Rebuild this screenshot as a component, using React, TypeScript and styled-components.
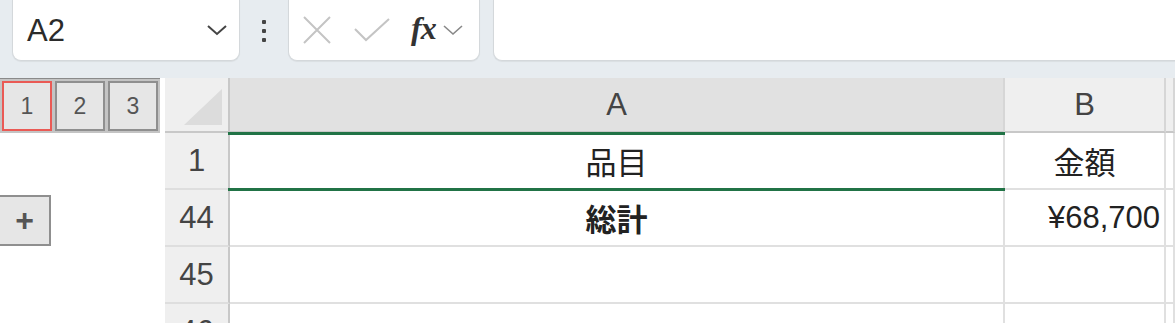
import React from "react";
import styled, { createGlobalStyle } from "styled-components";

const GlobalStyle = createGlobalStyle`
  html, body {
    margin: 0;
    padding: 0;
    background: #ffffff;
    overflow: hidden;
  }
  body {
    font-family: "Liberation Sans", "Noto Sans CJK JP", sans-serif;
    color: #333;
  }
`;

const Page = styled.div`
  width: 1175px;
  height: 323px;
  display: flex;
  flex-direction: column;
  overflow: hidden;
`;

const Toolbar = styled.div`
  height: 78px;
  flex: none;
  background: #e7ecf0;
  display: flex;
  align-items: flex-start;
  padding-left: 12px;
`;

const Box = styled.div<{ $width?: number; $grow?: boolean }>`
  height: 61px;
  box-sizing: border-box;
  background: #ffffff;
  border: 1px solid #d4d8db;
  border-top: none;
  border-radius: 0 0 9px 9px;
  box-shadow: 0 1px 1px rgba(0, 0, 0, 0.06);
  display: flex;
  align-items: center;
  ${(p) => (p.$width ? `width: ${p.$width}px;` : "")}
  ${(p) => (p.$grow ? "flex: 1; border-right: none; border-radius: 0 0 0 9px;" : "flex: none;")}
`;

const NameText = styled.span`
  font-size: 31px;
  color: #2b2b2b;
  padding-left: 14px;
  padding-top: 2px;
  flex: 1;
`;

const Chevron = styled.svg`
  margin-right: 11px;
`;

const Dots = styled.div`
  width: 48px;
  height: 61px;
  flex: none;
  display: flex;
  flex-direction: column;
  align-items: center;
  justify-content: center;
  gap: 5px;
  span {
    width: 4px;
    height: 4px;
    border-radius: 1px;
    background: #444;
  }
`;

const FxLabel = styled.span`
  font-family: "Liberation Serif", "DejaVu Serif", serif;
  font-style: italic;
  font-weight: bold;
  font-size: 32px;
  color: #333;
  letter-spacing: -1px;
  margin-left: 20px;
  margin-top: -4px;
`;

const Gap = styled.div<{ $w: number }>`
  width: ${(p) => p.$w}px;
  flex: none;
`;

const Main = styled.div`
  flex: 1;
  display: flex;
`;

const OutlinePanel = styled.div`
  width: 165px;
  flex: none;
  display: flex;
  flex-direction: column;
`;

const LevelStrip = styled.div`
  width: 160px;
  height: 55px;
  box-sizing: border-box;
  display: flex;
  gap: 3px;
  padding: 2px;
  background: #c4c4c4;
  border-top: 1px solid #8a8a8a;
`;

const LevelButton = styled.div<{ $active?: boolean }>`
  flex: 1;
  box-sizing: border-box;
  border: 2px solid ${(p) => (p.$active ? "#ea5a55" : "#8f8f8f")};
  background: #e6e6e6;
  display: flex;
  align-items: center;
  justify-content: center;
  font-size: 23px;
  color: #555;
`;

const PlusButton = styled.div`
  width: 51px;
  height: 51px;
  margin-top: 62px;
  box-sizing: border-box;
  border: 2px solid #8f8f8f;
  border-left: none;
  background: #e6e6e6;
  display: flex;
  align-items: center;
  justify-content: center;
  font-size: 32px;
  font-weight: bold;
  color: #555;
`;

const Sheet = styled.div`
  position: relative;
  flex: 1;
  display: grid;
  grid-template-columns: 65px 775px 161px 1fr;
  grid-auto-rows: 57px;
  grid-template-rows: 55px;
`;

const Corner = styled.div`
  background: #efefef;
  border-right: 2px solid #c8c8c8;
  border-bottom: 2px solid #c8c8c8;
  box-sizing: border-box;
  display: flex;
  align-items: flex-end;
  justify-content: flex-end;
  padding: 0 6px 6px 0;
`;

const ColHead = styled.div<{ $selected?: boolean }>`
  background: ${(p) => (p.$selected ? "#e1e1e1" : "#efefef")};
  border-right: 2px solid #d6d6d6;
  border-bottom: 2px solid #c8c8c8;
  box-sizing: border-box;
  display: flex;
  align-items: center;
  justify-content: center;
  font-size: 31px;
  color: #444;
`;

const RowHead = styled.div`
  background: #efefef;
  border-right: 2px solid #c8c8c8;
  border-bottom: 2px solid #dedede;
  box-sizing: border-box;
  display: flex;
  align-items: center;
  justify-content: center;
  font-size: 31px;
  color: #444;
`;

const Cell = styled.div<{ $align?: "center" | "right"; $bold?: boolean }>`
  background: #fff;
  border-right: 2px solid #e0e0e0;
  border-bottom: 2px solid #e0e0e0;
  box-sizing: border-box;
  display: flex;
  align-items: center;
  justify-content: ${(p) => (p.$align === "right" ? "flex-end" : "center")};
  padding-right: ${(p) => (p.$align === "right" ? "4px" : "0")};
  font-size: 31px;
  font-weight: ${(p) => (p.$bold ? 700 : 400)};
  color: #222;
  white-space: nowrap;
`;

const Selection = styled.div`
  position: absolute;
  left: 63px;
  top: 54px;
  width: 777px;
  height: 59px;
  box-sizing: border-box;
  border-top: 3px solid #217346;
  border-bottom: 3px solid #217346;
  pointer-events: none;
`;

const rows = [
  { n: "1", a: "品目", b: "金額" },
  { n: "44", a: "総計", b: "¥68,700", bold: true, right: true },
  { n: "45", a: "", b: "" },
  { n: "46", a: "", b: "" },
];

export default function App() {
  return (
    <>
      <GlobalStyle />
      <Page>
        <Toolbar>
          <Box $width={228}>
            <NameText>A2</NameText>
            <Chevron width="22" height="12" viewBox="0 0 22 12">
              <path d="M2 2 L11 10 L20 2" fill="none" stroke="#444" strokeWidth="2" />
            </Chevron>
          </Box>
          <Dots>
            <span />
            <span />
            <span />
          </Dots>
          <Box $width={192}>
            <svg width="30" height="30" viewBox="0 0 30 30" style={{ marginLeft: 13 }}>
              <path d="M2 2 L28 28 M28 2 L2 28" stroke="#c4c4c4" strokeWidth="2" fill="none" />
            </svg>
            <svg width="38" height="26" viewBox="0 0 38 26" style={{ marginLeft: 21 }}>
              <path d="M2 12 L13 23 L36 2" stroke="#c4c4c4" strokeWidth="2" fill="none" />
            </svg>
            <FxLabel>fx</FxLabel>
            <svg width="22" height="12" viewBox="0 0 22 12" style={{ marginLeft: 6 }}>
              <path d="M2 2 L11 10 L20 2" fill="none" stroke="#888" strokeWidth="1.6" />
            </svg>
          </Box>
          <Gap $w={13} />
          <Box $grow />
        </Toolbar>
        <Main>
          <OutlinePanel>
            <LevelStrip>
              <LevelButton $active>1</LevelButton>
              <LevelButton>2</LevelButton>
              <LevelButton>3</LevelButton>
            </LevelStrip>
            <PlusButton>+</PlusButton>
          </OutlinePanel>
          <Sheet>
            <Corner>
              <svg width="38" height="36" viewBox="0 0 38 36">
                <polygon points="0,36 38,0 38,36" fill="#dcdcdc" />
              </svg>
            </Corner>
            <ColHead $selected>A</ColHead>
            <ColHead>B</ColHead>
            <ColHead />
            {rows.map((r) => (
              <React.Fragment key={r.n}>
                <RowHead>{r.n}</RowHead>
                <Cell $bold={r.bold}>{r.a}</Cell>
                <Cell $align={r.right ? "right" : "center"}>{r.b}</Cell>
                <Cell />
              </React.Fragment>
            ))}
            <Selection />
          </Sheet>
        </Main>
      </Page>
    </>
  );
}
